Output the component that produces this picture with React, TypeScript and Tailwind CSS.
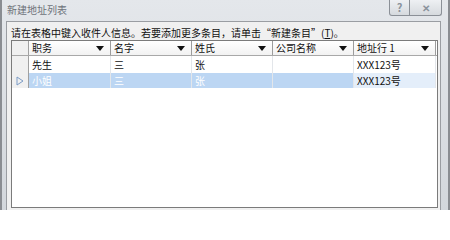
const font = { fontFamily: '"Noto Sans CJK SC", "Liberation Sans", sans-serif' };

type Col = { label: string; w: string };

const cols: Col[] = [
  { label: "职务", w: "w-[82px]" },
  { label: "名字", w: "w-[81px]" },
  { label: "姓氏", w: "w-[81px]" },
  { label: "公司名称", w: "w-[81px]" },
  { label: "地址行 1", w: "w-[82px]" },
];

const rows = [
  ["先生", "三", "张", "", "XXX123号"],
  ["小姐", "三", "张", "", "XXX123号"],
];

function Arrow() {
  return (
    <svg width="8" height="5" viewBox="0 0 8 5" className="shrink-0">
      <path d="M0 0h8L4 5z" fill="#111" />
    </svg>
  );
}

export default function App() {
  return (
    <div
      className="w-[450px] h-[210px] overflow-hidden bg-gradient-to-b from-[#e4e7eb] to-[#d3d7dc] border-l-2 border-r-2 border-[#8a8d92] flex flex-col"
      style={font}
    >
      {/* Title bar */}
      <div className="h-[21px] shrink-0 flex items-start relative">
        <span className="pl-[5px] pt-[4px] text-[10px] leading-[12px] text-[#6e737a]">新建地址列表</span>
        <div className="ml-auto mr-[6px] flex">
          <div className="w-[21px] h-[16px] border border-t-0 border-[#8b9097] rounded-bl-[3px] bg-gradient-to-b from-[#eef0f3] to-[#d6dade] flex items-center justify-center text-[11px] leading-none text-[#8a929c] font-bold">
            ?
          </div>
          <div className="w-[32px] h-[16px] border border-t-0 border-l-0 border-[#8b9097] rounded-br-[3px] bg-gradient-to-b from-[#eef0f3] to-[#d6dade] flex items-center justify-center text-[10px] leading-none text-[#8a929c] font-bold">
            ✕
          </div>
        </div>
      </div>

      {/* Client area */}
      <div className="flex-1 ml-[4px] mr-[7px] bg-[#f0f0f0] border border-[#9a9da2] border-b-0 flex flex-col px-[4px]">
        <div className="h-[18px] shrink-0 flex items-end pb-[1px] text-[10px] leading-[12px] text-[#111]">
          请在表格中键入收件人信息。若要添加更多条目，请单击“新建条目”(<span className="underline">T</span>)。
        </div>

        <div className="h-[168px] shrink-0 w-[427px] bg-white border border-[#7b7b7b] flex flex-col">
          {/* Header */}
          <div className="h-[15px] flex border-b border-[#a8a8a8]">
            <div className="w-[17px] shrink-0 bg-[#f0f0f0] border-r border-[#a0a0a0]" />
            {cols.map((c) => (
              <div
                key={c.label}
                className={`${c.w} shrink-0 flex items-center pl-[3px] pr-[6px] bg-gradient-to-b from-white to-[#f2f2f2] border-r border-[#9c9c9c] text-[10px] leading-none text-[#111]`}
              >
                <span className="flex-1">{c.label}</span>
                <Arrow />
              </div>
            ))}
          </div>

          {/* Rows */}
          {rows.map((r, i) => {
            const sel = i === 1;
            return (
              <div key={i} className={`flex ${sel ? "h-[15px]" : "h-[17px]"}`}>
                <div className="w-[17px] shrink-0 bg-[#f0f0f0] border-r border-[#a0a0a0] flex items-center justify-center">
                  {sel && (
                    <svg width="8" height="10" viewBox="0 0 8 10">
                      <path d="M1 1l6 4-6 4z" fill="none" stroke="#7c9cc6" strokeWidth="1" />
                    </svg>
                  )}
                </div>
                {r.map((v, j) => {
                  const focus = sel && j === 4;
                  const bg = sel ? (focus ? "bg-[#e4eefa]" : "bg-[#bcd6f3]") : "bg-white";
                  const color = sel && !focus ? "text-white" : "text-[#111]";
                  return (
                    <div
                      key={j}
                      className={`${cols[j].w} shrink-0 flex items-center pl-[3px] border-r border-[#e3e6ea] text-[10px] leading-none ${bg} ${color}`}
                    >
                      {v}
                    </div>
                  );
                })}
              </div>
            );
          })}
        </div>
      </div>
    </div>
  );
}
